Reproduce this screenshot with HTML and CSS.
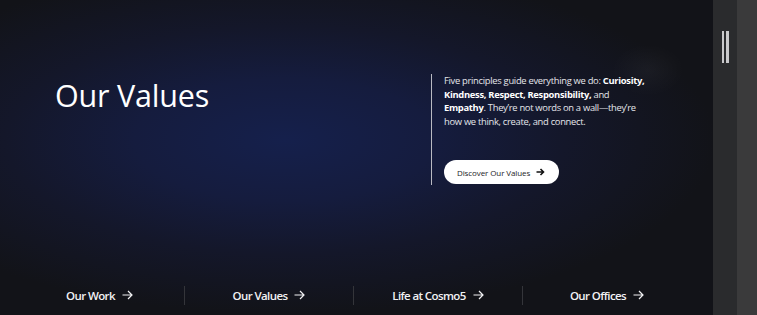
FILE: index.html
```html
<!DOCTYPE html>
<html lang="en">
  <head>
    <meta charset="UTF-8" />
    <meta name="viewport" content="width=device-width, initial-scale=1.0" />
    <title>Our Values</title>
    <link rel="stylesheet" href="styles.css">
  </head>

  <body>
    <div class="page">
      <main class="main">
        <!-- hero -->
        <section class="hero">
          <h1 class="hero-title">Our Values</h1>
          <div class="hero-aside">
            <p class="hero-text">
              Five principles guide everything we do: <b>Curiosity,</b><br />
              <b>Kindness, Respect, Responsibility,</b> and<br />
              <b>Empathy</b>. They’re not words on a wall—they’re<br />
              how we think, create, and connect.
            </p>
            <button type="button" class="btn-discover">
              Discover Our Values
              <svg width="9" height="8" viewBox="0 0 9 8" aria-hidden="true">
                <path d="M0.5 4H7.5M4.5 1L7.5 4L4.5 7" fill="none" stroke="#111" stroke-width="1.6" />
              </svg>
            </button>
          </div>
        </section>

        <!-- sub nav -->
        <nav class="sub-nav">
          <a href="#" class="sub-link">Our Work <svg class="arrow" viewBox="0 0 11 10"><path d="M0.5 5H10M6 1L10 5L6 9" /></svg></a>
          <a href="#" class="sub-link">Our Values <svg class="arrow" viewBox="0 0 11 10"><path d="M0.5 5H10M6 1L10 5L6 9" /></svg></a>
          <a href="#" class="sub-link">Life at Cosmo5 <svg class="arrow" viewBox="0 0 11 10"><path d="M0.5 5H10M6 1L10 5L6 9" /></svg></a>
          <a href="#" class="sub-link">Our Offices <svg class="arrow" viewBox="0 0 11 10"><path d="M0.5 5H10M6 1L10 5L6 9" /></svg></a>
        </nav>
      </main>

      <!-- side rail -->
      <aside class="rail">
        <span class="rail-bar"></span>
        <span class="rail-bar"></span>
      </aside>
      <div class="scroll"></div>
    </div>
  </body>
</html>
```

FILE: styles.css
```css
html,
body {
  margin: 0;
  padding: 0;
  height: 100%;
}

body {
  font-family: "Open Sans", "Noto Sans", sans-serif;
  color: #fff;
  background: #131418;
  overflow: hidden;
}

.page {
  display: flex;
  height: 315px;
}

.main {
  flex: 1;
  display: flex;
  flex-direction: column;
  background:
    radial-gradient(ellipse 36px 26px at 648px 70px, rgba(255, 255, 255, 0.035), transparent),
    radial-gradient(ellipse 430px 175px at 285px 140px, #15204c 0%, #151c3e 35%, #14172a 65%, #121318 100%);
}

/* 히어로 */
.hero {
  height: 275px;
  box-sizing: border-box;
  display: flex;
  align-items: flex-start;
  padding: 74px 0 0 55px;
}

.hero-title {
  width: 376px;
  margin: 0;
  padding-top: 1px;
  font-size: 30.5px;
  font-weight: 400;
  line-height: 40px;
  letter-spacing: -0.2px;
}

.hero-aside {
  border-left: 1px solid #b9bac2;
  padding-left: 12px;
  height: 111px;
  box-sizing: border-box;
}

.hero-text {
  margin: 0;
  font-size: 9.4px;
  line-height: 13.6px;
  color: #e4e5ea;
  letter-spacing: -0.3px;
  white-space: nowrap;
}

.hero-text b {
  color: #fff;
  font-weight: 700;
}

.btn-discover {
  margin-top: 32px;
  height: 24px;
  padding: 0 14px 0 13px;
  border: none;
  border-radius: 12px;
  background: #fff;
  color: #1c1c1f;
  font-family: inherit;
  font-size: 8px;
  letter-spacing: -0.1px;
  display: flex;
  align-items: center;
  gap: 6px;
  cursor: pointer;
}

/* 하단 링크 */
.sub-nav {
  flex: 1;
  display: grid;
  grid-template-columns: repeat(4, 1fr);
  align-items: center;
  padding: 0 22px 0 15px;
}

.sub-link {
  display: flex;
  justify-content: center;
  align-items: center;
  gap: 7px;
  height: 19px;
  color: #f2f2f4;
  text-decoration: none;
  font-size: 11.5px;
  font-weight: 600;
  letter-spacing: -0.6px;
  border-left: 1px solid #34353a;
}

.sub-link:first-child {
  border-left: none;
}

.arrow {
  width: 11px;
  height: 10px;
  fill: none;
  stroke: #f2f2f4;
  stroke-width: 1.2;
}

/* 오른쪽 레일 */
.rail {
  width: 24px;
  background: #2a2b2d;
  display: flex;
  justify-content: center;
  gap: 2px;
  padding-top: 31px;
  box-sizing: border-box;
}

.rail-bar {
  width: 2.5px;
  height: 32px;
  background: #c9c9cb;
}

.scroll {
  width: 20px;
  background: #3a3a3b;
}
```
